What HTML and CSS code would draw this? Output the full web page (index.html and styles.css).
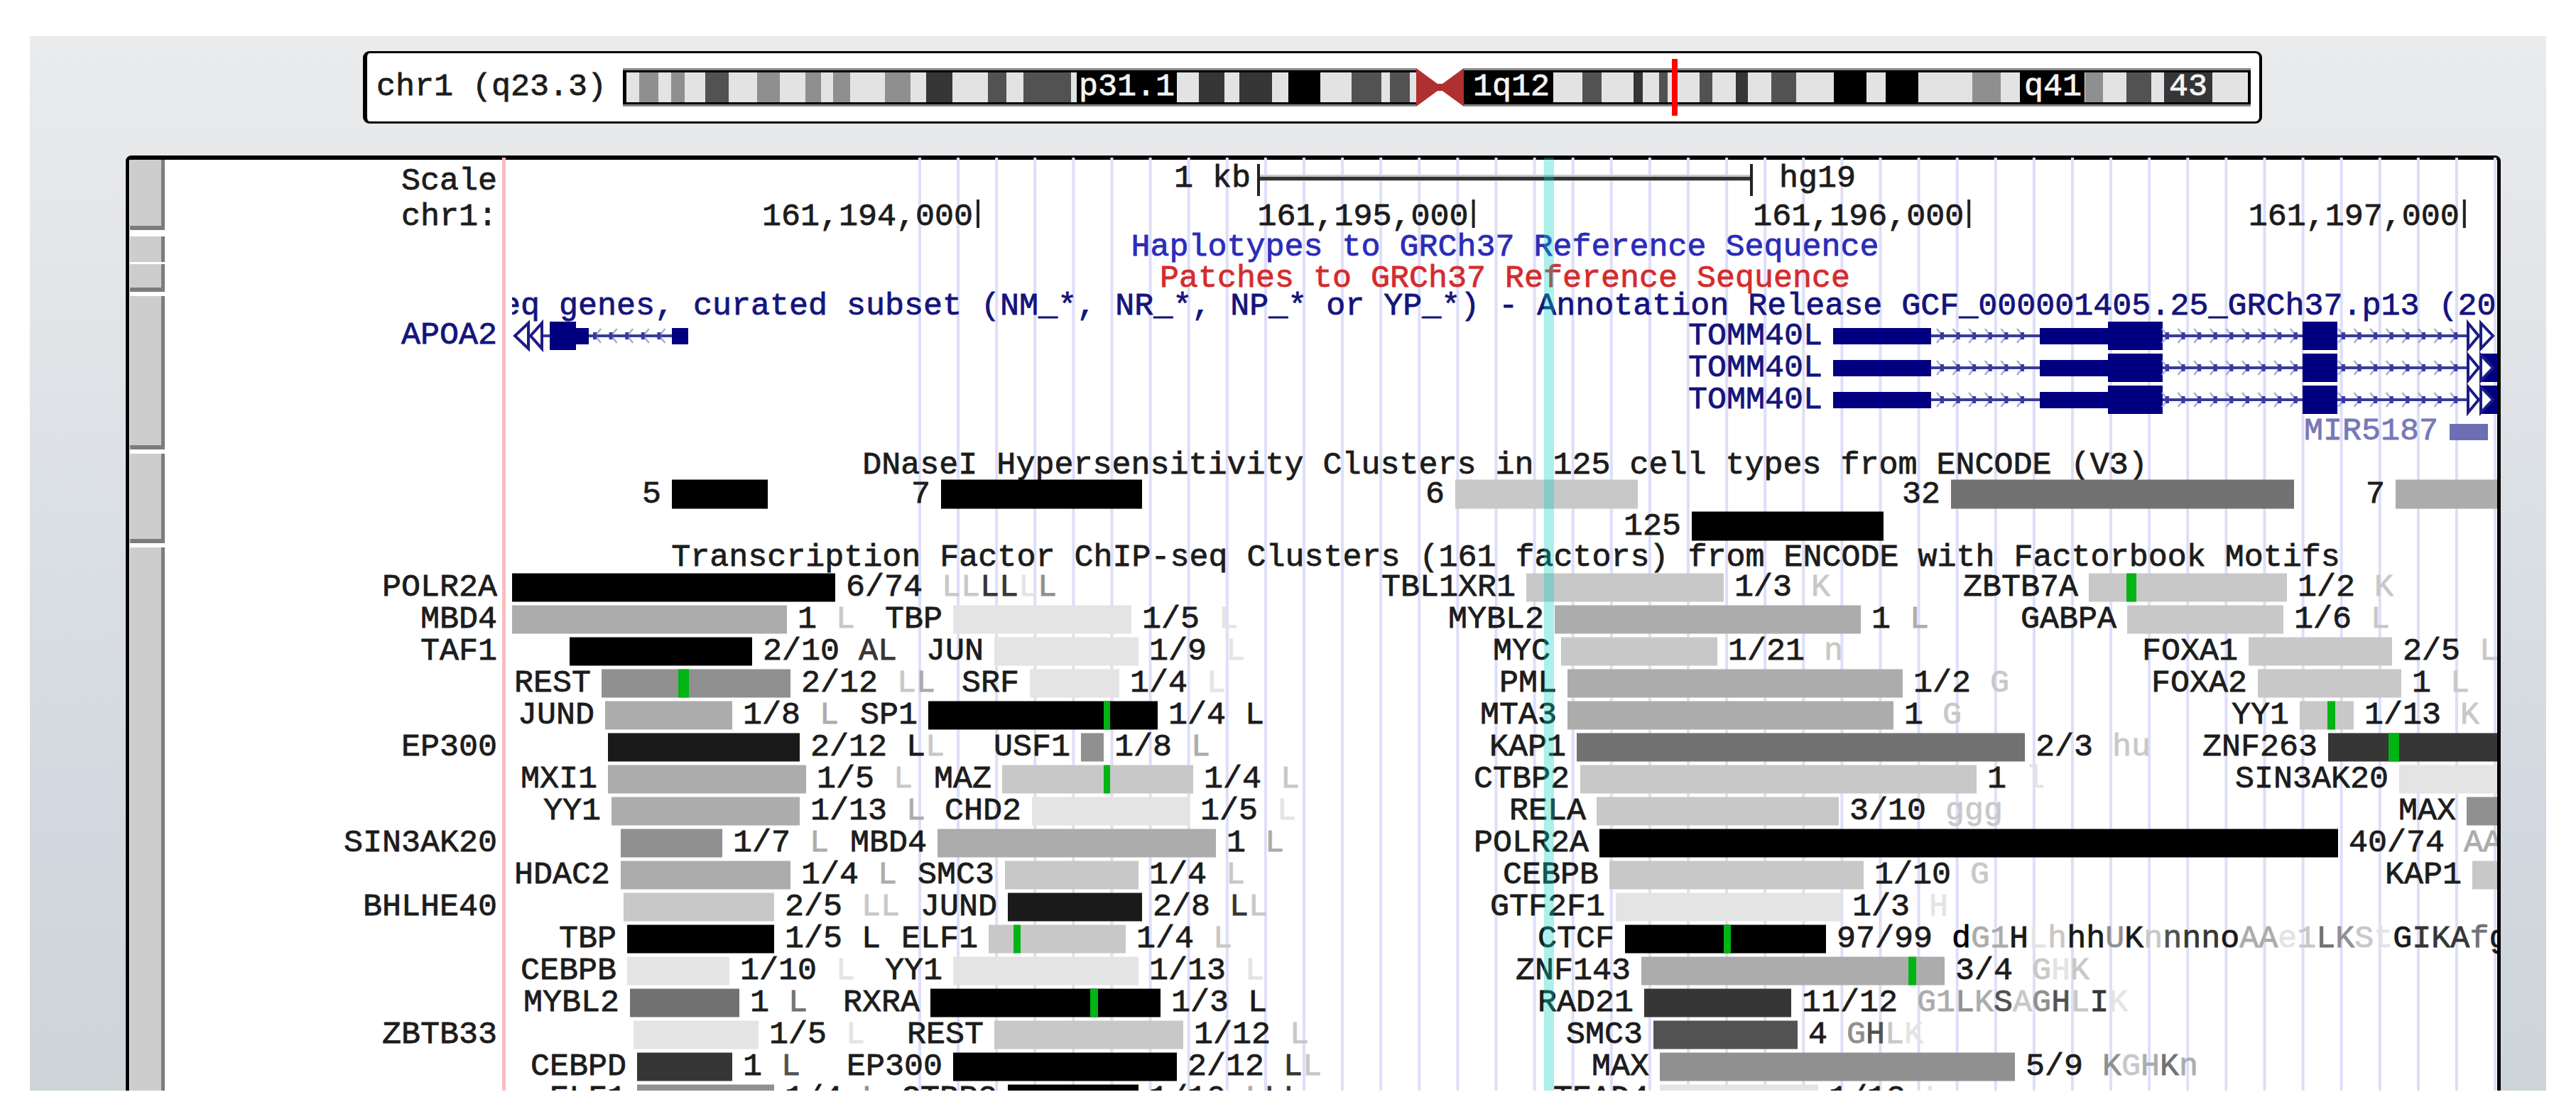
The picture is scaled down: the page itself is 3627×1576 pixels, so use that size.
FILE: index.html
```html
<!doctype html>
<html lang="en">
  <head>
    <meta charset="utf-8" />
    <title>chr1 (q23.3) - Genome Browser</title>
    <link rel="stylesheet" href="styles.css">
  </head>
  <body>
    <main class="page">
      <div class="ideogram">
        <svg id="ideogram" viewBox="517 75 2664 96" width="2664" height="96"></svg>
      </div>
      <div class="browser">
        <div class="handles">
          <div class="handle ruler"></div>
          <div class="handle haplotypes"></div>
          <div class="handle patches"></div>
          <div class="handle genes"></div>
          <div class="handle dnase"></div>
          <div class="handle tfbs"></div>
        </div>
        <svg id="tracks" viewBox="232 222 3284 1314" width="3284" height="1314"></svg>
      </div>
    </main>
    <script src="script.js"></script>
  </body>
</html>
```

FILE: styles.css
```css
body {
  margin: 0;
  background: #fff;
}

.page {
  width: 3543px;
  height: 1485px;
  margin: 51px 0 0 42px;
  padding-top: 21px;
  box-sizing: border-box;
  overflow: hidden;
  background: linear-gradient(#eaebec, #e3e5e8 24%, #dbe0e5 45%, #d2d8df 75%, #cdd5d8);
}

.page svg {
  display: block;
}

.page text {
  font-family: "Liberation Mono", monospace;
  font-size: 45px;
  white-space: pre;
  color: #1c1c1c;
  fill: currentColor;
  stroke: currentColor;
  stroke-width: 0.8px;
}
.page tspan {
  fill: currentColor;
  stroke: currentColor;
}

.ideogram {
  width: 2664px;
  margin-left: 469px;
  border: 3px solid #000;
  border-left-width: 6px;
  border-right-width: 4px;
  border-radius: 9px;
  background: #fff;
}

.browser {
  display: flex;
  width: 3334px;
  height: 1340px;
  margin: 45px 0 0 135px;
  border: 5px solid #000;
  border-top-width: 3px;
  border-radius: 8px 8px 0 0;
  background: #fff;
}

.handles {
  width: 50px;
  border-top: 3px solid #000;
  box-sizing: border-box;
}

.handle {
  width: 49px;
  margin-left: 1px;
  margin-bottom: 6px;
  box-sizing: border-box;
  background: #cdcdcd;
  border-right: 5px solid #7c7c7c;
  border-bottom: 6px solid #7c7c7c;
}
.handle.ruler {
  height: 99px;
  margin-bottom: 9px;
}
.handle.haplotypes {
  height: 36px;
  margin-bottom: 3px;
  border-bottom: none;
}
.handle.patches {
  height: 39px;
}
.handle.genes {
  height: 216px;
}
.handle.dnase {
  height: 126px;
}
.handle.tfbs {
  height: 800px;
}

#tracks .hap {
  color: #2c2cb8;
}
#tracks .patch {
  color: #d42c2c;
}
#tracks .gene {
  color: #14147c;
}
#tracks .mirna {
  color: #7878b8;
}
#ideogram .light {
  color: #f4f4f4;
}
```

FILE: script.js
```js
const NS = 'http://www.w3.org/2000/svg';
const tracks = document.getElementById('tracks');
const ideogram = document.getElementById('ideogram');

const LEFT = 721;
const RIGHT = 3516;
const NAVY = '#000080';

function add(parent, tag, attrs, text) {
  const el = document.createElementNS(NS, tag);
  for (const key in attrs) el.setAttribute(key, attrs[key]);
  if (text !== undefined) el.textContent = text;
  parent.appendChild(el);
  return el;
}

function box(parent, x1, x2, y1, y2, fill) {
  return add(parent, 'rect', { x: x1, y: y1, width: x2 - x1, height: y2 - y1, fill: fill });
}

function label(parent, x, y, text, anchor, cls) {
  return add(parent, 'text', { x: x, y: y, 'text-anchor': anchor || 'start', class: cls || '' }, text);
}

// ---- chromosome ideogram ----
const bands = [
  [900, 927, '#8f8f8f'], [945, 964, '#8f8f8f'], [993, 1026, '#525252'], [1066, 1098, '#8f8f8f'],
  [1134, 1156, '#8f8f8f'], [1173, 1197, '#8f8f8f'], [1246, 1282, '#8f8f8f'], [1304, 1341, '#363636'],
  [1391, 1417, '#525252'], [1441, 1508, '#525252'], [1516, 1657, '#000'], [1688, 1724, '#363636'],
  [1745, 1791, '#363636'], [1814, 1859, '#000'], [1903, 1945, '#525252'], [1957, 1985, '#525252'],
  [2061, 2187, '#000'], [2228, 2255, '#525252'], [2300, 2313, '#363636'], [2336, 2348, '#525252'],
  [2393, 2411, '#525252'], [2444, 2461, '#363636'], [2494, 2529, '#525252'], [2582, 2628, '#000'],
  [2655, 2701, '#000'], [2777, 2817, '#8f8f8f'], [2844, 2935, '#000'], [2936, 2961, '#8f8f8f'],
  [2994, 3029, '#525252'], [3047, 3115, '#363636']
];
box(ideogram, 877, 3169, 96, 150, '#8a8a8a');
box(ideogram, 877, 3169, 99, 147, '#000');
box(ideogram, 882, 3165, 102, 144, '#e3e3e3');
bands.forEach(([x1, x2, fill]) => box(ideogram, x1, x2, 102, 144, fill));
box(ideogram, 1994, 2061, 95, 151, '#fff');
add(ideogram, 'path', { d: 'M1994 96 L2024 118 H2031 L2061 96 V150 L2031 128 H2024 L1994 150 Z', fill: '#b03030' });
box(ideogram, 2354, 2362, 83, 163, '#f00');
label(ideogram, 530, 134, 'chr1 (q23.3)');
label(ideogram, 1519, 134, 'p31.1', 'start', 'light');
label(ideogram, 2074, 134, '1q12', 'start', 'light');
label(ideogram, 2850, 134, 'q41', 'start', 'light');
label(ideogram, 3054, 134, '43', 'start', 'light');

// ---- guide lines ----
box(tracks, 232, 3516, 222, 225, '#000');
for (let i = 0; i < 42; i++) {
  box(tracks, 1293 + i * 54.1, 1297 + i * 54.1, 222, 1536, '#dedefa');
}
box(tracks, 707, 712, 222, 1536, '#fbbcbe');

const defs = add(tracks, 'defs', {});
add(add(defs, 'clipPath', { id: 'plot' }), 'rect', { x: LEFT, y: 222, width: RIGHT - LEFT, height: 1314 });
const plot = add(tracks, 'g', { 'clip-path': 'url(#plot)' });

// ---- ruler ----
label(tracks, 700, 267, 'Scale', 'end');
label(tracks, 700, 317, 'chr1:', 'end');
label(plot, 1761, 263, '1 kb', 'end');
label(plot, 2505, 263, 'hg19');
box(plot, 1772, 2466, 246, 255, '#c8c8c8');
box(plot, 1772, 2466, 249, 254, '#333');
box(plot, 1770, 1774, 231, 276, '#222');
box(plot, 2464, 2468, 231, 276, '#222');
['161,194,000', '161,195,000', '161,196,000', '161,197,000'].forEach((pos, i) => {
  const x = 1377 + i * 697.6;
  label(plot, x - 7, 317, pos, 'end');
  box(plot, x - 2, x + 2, 281, 321, '#222');
});

// ---- track titles ----
label(plot, 2119, 360, 'Haplotypes to GRCh37 Reference Sequence', 'middle', 'hap');
label(plot, 2119, 404, 'Patches to GRCh37 Reference Sequence', 'middle', 'patch');
label(plot, 706, 443, 'eq genes, curated subset (NM_*, NR_*, NP_* or YP_*) - Annotation Release GCF_000001405.25_GRCh37.p13 (20', 'start', 'gene');
label(plot, 2119, 667, 'DNaseI Hypersensitivity Clusters in 125 cell types from ENCODE (V3)', 'middle');
label(plot, 2120, 797, 'Transcription Factor ChIP-seq Clusters (161 factors) from ENCODE with Factorbook Motifs', 'middle');

// ---- genes ----
function intron(x1, x2, y, dir, first) {
  box(plot, x1, x2, y - 2, y + 2, '#3a3a9c');
  for (let x = first; x < x2 - 3; x += 22.6) {
    add(plot, 'path', {
      d: `M${x - dir * 8} ${y - 10} L${x} ${y} L${x - dir * 8} ${y + 10}`,
      fill: 'none', stroke: '#a8a8d8', 'stroke-width': 2.5
    });
    box(plot, x - 3, x + 2, y - 5, y + 5, '#3a3a9c');
  }
}
function arrow(base, tip, y) {
  add(plot, 'path', {
    d: `M${base} ${y - 18} L${tip} ${y} L${base} ${y + 18} Z`,
    fill: '#fff', stroke: '#1c1c84', 'stroke-width': 4
  });
}
const utr = (x1, x2, y) => box(plot, x1, x2, y - 11, y + 12, NAVY);
const exon = (x1, x2, y) => box(plot, x1, x2, y - 20, y + 20, NAVY);

label(tracks, 700, 484, 'APOA2', 'end', 'gene');
box(plot, 764, 774, 471, 475, '#3a3a9c');
arrow(744, 725, 473);
arrow(763, 747, 473);
exon(774, 811, 473);
utr(811, 829, 473);
intron(829, 946, 473, -1, 838);
utr(946, 969, 473);

[473, 518, 563].forEach((y, i) => {
  label(plot, 2566, y + 11.5, 'TOMM40L', 'end', 'gene');
  utr(2581, 2719, y);
  intron(2719, 2872, y, 1, 2735);
  utr(2872, 2968, y);
  exon(2968, 3045, y);
  intron(3045, 3242, y, 1, 3052);
  exon(3242, 3291, y);
  intron(3291, 3474, y, 1, 3300);
  if (i > 0) exon(3492, 3516, y);
  arrow(3475, 3490, y);
  arrow(3493, 3510, y);
});
label(plot, 3433, 619, 'MIR5187', 'end', 'mirna');
box(plot, 3449, 3503, 597, 620, '#6e6eb4');

// ---- DNaseI clusters: [row, label, start, end, colour] ----
[
  [0, '5', 946, 1081, '#000'],
  [0, '7', 1325, 1608, '#000'],
  [0, '6', 2049, 2306, '#c8c8c8'],
  [1, '125', 2382, 2652, '#000'],
  [0, '32', 2747, 3230, '#727272'],
  [0, '7', 3373, 3516, '#acacac']
].forEach(([row, name, x1, x2, fill]) => {
  label(plot, x1 - 15, 708 + row * 45, name, 'end');
  box(plot, x1, x2, 675.5 + row * 45, 716.5 + row * 45, fill);
});

// ---- TF clusters: [label, start, end, colour, count, [[letters, colour], ...], motif start, motif end] ----
const K = '#000', D1 = '#1a1a1a', D3 = '#363636', D5 = '#525252', G7 = '#727272',
  G9 = '#909090', GA = '#acacac', GC = '#c8c8c8', GE = '#e4e4e4';

const clusters = [
  [
    ['POLR2A', 721, 1176, K, '6/74', [['LL', GC], ['LL', D3], ['L', GE], ['L', G9]]],
    ['TBL1XR1', 2149, 2427, GC, '1/3', [['K', GC]]],
    ['ZBTB7A', 2941, 3220, GC, '1/2', [['K', GC]], 2994, 3008]
  ],
  [
    ['MBD4', 721, 1108, GA, '1', [['L', GC]]],
    ['TBP', 1342, 1593, GE, '1/5', [['L', GE]]],
    ['MYBL2', 2189, 2620, GA, '1', [['L', GA]]],
    ['GABPA', 2995, 3215, GC, '1/6', [['L', GC]]]
  ],
  [
    ['TAF1', 802, 1059, K, '2/10', [['AL', D3]]],
    ['JUN', 1400, 1603, GE, '1/9', [['L', GE]]],
    ['MYC', 2198, 2418, GC, '1/21', [['n', GC]]],
    ['FOXA1', 3166, 3368, GC, '2/5', [['L', GC]]]
  ],
  [
    ['REST', 847, 1113, G9, '2/12', [['L', GC], ['L', GA]], 955, 970],
    ['SRF', 1450, 1576, GE, '1/4', [['L', GE]]],
    ['PML', 2207, 2679, GA, '1/2', [['G', GC]]],
    ['FOXA2', 3179, 3381, GC, '1', [['L', GC]]]
  ],
  [
    ['JUND', 852, 1031, GA, '1/8', [['L', GA]]],
    ['SP1', 1307, 1630, K, '1/4', [['L', D1]], 1554, 1563],
    ['MTA3', 2207, 2666, GA, '1', [['G', GC]]],
    ['YY1', 3238, 3314, GC, '1/13', [['K', GC]], 3277, 3288]
  ],
  [
    ['EP300', 856, 1126, D1, '2/12', [['L', D1], ['L', GC]]],
    ['USF1', 1522, 1554, G9, '1/8', [['L', GA]]],
    ['KAP1', 2220, 2851, G7, '2/3', [['hu', GC]]],
    ['ZNF263', 3278, 3516, D3, '', [], 3363, 3378]
  ],
  [
    ['MXI1', 856, 1135, GA, '1/5', [['L', GC]]],
    ['MAZ', 1411, 1680, GC, '1/4', [['L', GC]], 1554, 1563],
    ['CTBP2', 2225, 2783, GC, '1', [['l', GE]]],
    ['SIN3AK20', 3378, 3516, GE, '', []]
  ],
  [
    ['YY1', 861, 1126, GA, '1/13', [['L', GA]]],
    ['CHD2', 1453, 1675, GE, '1/5', [['L', GE]]],
    ['RELA', 2248, 2589, GC, '3/10', [['ggg', GC]]],
    ['MAX', 3473, 3516, G9, '', []]
  ],
  [
    ['SIN3AK20', 874, 1017, G9, '1/7', [['L', GA]]],
    ['MBD4', 1320, 1712, GA, '1', [['L', GA]]],
    ['POLR2A', 2252, 3292, K, '40/74', [['AA', GA]]]
  ],
  [
    ['HDAC2', 874, 1113, GA, '1/4', [['L', GA]]],
    ['SMC3', 1415, 1603, GC, '1/4', [['L', GC]]],
    ['CEBPB', 2266, 2624, GC, '1/10', [['G', GC]]],
    ['KAP1', 3481, 3516, GC, '', []]
  ],
  [
    ['BHLHE40', 878, 1090, GC, '2/5', [['LL', GC]]],
    ['JUND', 1419, 1608, D1, '2/8', [['L', D3], ['L', GC]]],
    ['GTF2F1', 2275, 2593, GE, '1/3', [['H', GE]]]
  ],
  [
    ['TBP', 883, 1090, K, '1/5', [['L', D1]]],
    ['ELF1', 1392, 1585, GC, '1/4', [['L', GC]], 1427, 1437],
    ['CTCF', 2288, 2571, K, '97/99', [
      ['d', K], ['G', GA], ['1', GA], ['H', D1], ['L', GE], ['h', GC], ['hh', D1], ['U', G9], ['K', D1],
      ['n', GC], ['n', D5], ['nn', D3], ['o', D1], ['AA', GA], ['e', GE], ['1', GC], ['L', G7], ['K', G9],
      ['S', GC], ['t', GE], ['G', D1], ['IKA', D3], ['f', G7], ['g', D1]
    ], 2427, 2437]
  ],
  [
    ['CEBPB', 883, 1027, GE, '1/10', [['L', GE]]],
    ['YY1', 1342, 1603, GE, '1/13', [['L', GE]]],
    ['ZNF143', 2311, 2738, GA, '3/4', [['G', GC], ['H', GE], ['K', GC]], 2687, 2698]
  ],
  [
    ['MYBL2', 887, 1041, G7, '1', [['L', G7]]],
    ['RXRA', 1310, 1634, K, '1/3', [['L', D1]], 1535, 1546],
    ['RAD21', 2315, 2522, D3, '11/12', [
      ['G1', GA], ['L', G9], ['K', GA], ['S', D5], ['A', GC], ['G', G9], ['H', D5], ['L', GC], ['I', D3], ['K', GE]
    ]]
  ],
  [
    ['ZBTB33', 892, 1068, GE, '1/5', [['L', GE]]],
    ['REST', 1400, 1666, GC, '1/12', [['L', GC]]],
    ['SMC3', 2328, 2531, D5, '4', [['G', G9], ['H', D5], ['L', GC], ['K', GE]]]
  ],
  [
    ['CEBPD', 897, 1031, D3, '1', [['L', D5]]],
    ['EP300', 1342, 1657, K, '2/12', [['L', D3], ['L', GC]]],
    ['MAX', 2337, 2837, G9, '5/9', [['K', G9], ['G', GC], ['H', GA], ['K', G7], ['n', GA]]]
  ],
  [
    ['ELF1', 897, 1090, G9, '1/4', [['L', G9]]],
    ['CTBP2', 1419, 1603, K, '1/10', [['L', GA], ['LL', D3]]],
    ['TEAD4', 2337, 2560, GE, '1/12', [['L', GE]]]
  ]
];

clusters.forEach((row, i) => {
  const top = 807.5 + i * 45;
  const base = 839 + i * 45;
  row.forEach(([name, x1, x2, fill, count, letters, m1, m2]) => {
    // a name that does not fit inside the plot moves to the left margin
    if (x1 - 17 - name.length * 27 < LEFT - 4) label(tracks, 700, base, name, 'end');
    else label(plot, x1 - 15, base, name, 'end');
    box(plot, x1, x2, top, top + 40, fill);
    if (m1) box(plot, m1, m2, top, top + 40, '#00b414');
    if (!count) return;
    const text = label(plot, x2 + 15, base, count + ' ');
    letters.forEach(([chars, colour]) => {
      add(text, 'tspan', { color: colour }, chars);
    });
  });
});

// highlighted position, drawn over everything
box(tracks, 2174, 2188, 222, 1536, 'rgba(0, 210, 190, 0.33)');
```
